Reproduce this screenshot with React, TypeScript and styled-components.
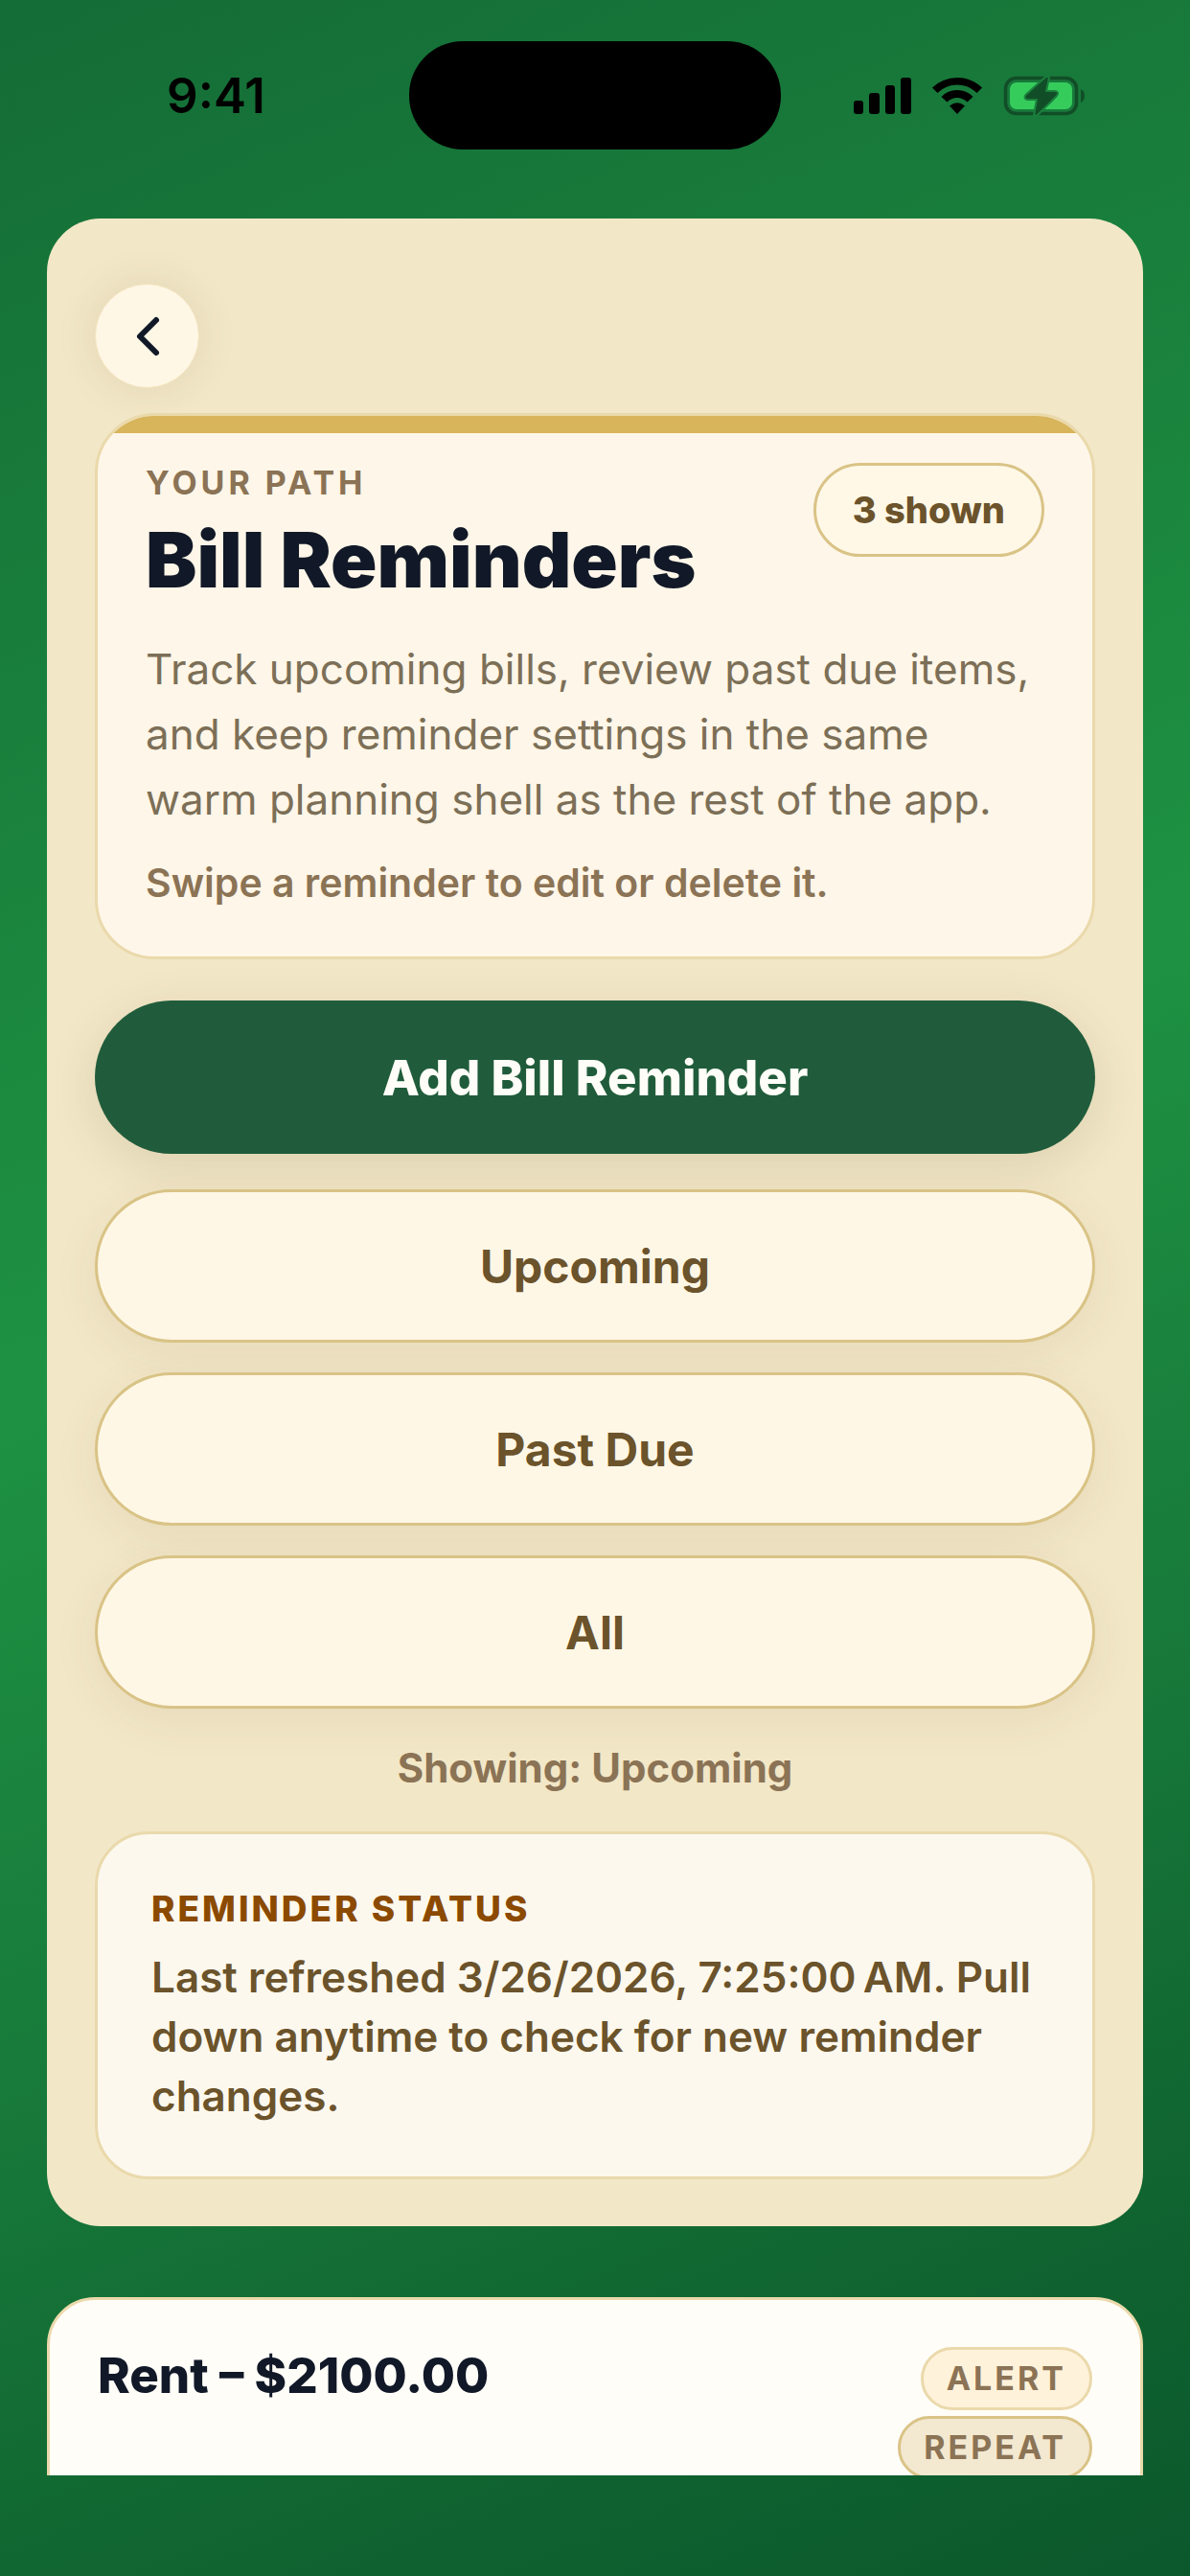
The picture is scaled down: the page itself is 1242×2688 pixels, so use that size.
import React from 'react';
import styled, { createGlobalStyle } from 'styled-components';

const GlobalStyle = createGlobalStyle`
  * { box-sizing: border-box; }
  html, body, #root { height: 100%; }
  body {
    margin: 0;
    font-family: Inter, "Liberation Sans", sans-serif;
    -webkit-font-smoothing: antialiased;
  }
  h1, h2, p { margin: 0; }
  button { font-family: inherit; cursor: pointer; }
`;

const Screen = styled.div`
  height: 100vh;
  display: flex;
  flex-direction: column;
  background: linear-gradient(158deg, #146c36 0%, #1e9242 46%, #17783a 70%, #116731 84%, #0b582c 100%);
`;

const StatusBar = styled.header`
  flex: none;
  display: grid;
  grid-template-columns: 1fr 388px 1fr;
  align-items: center;
  padding: 43px 0 72px;
`;

const Clock = styled.time`
  justify-self: center;
  padding-left: 24px;
  font-size: 51px;
  line-height: 60px;
  font-weight: 600;
  color: #000;
`;

const Island = styled.div`
  height: 113px;
  border-radius: 56px;
  background: #000;
`;

const Indicators = styled.div`
  display: flex;
  align-items: center;
  gap: 22px;
  padding-left: 76px;
`;

const Scroller = styled.main`
  flex: 1;
  min-height: 0;
  margin-bottom: 105px;
  padding: 0 49px;
  overflow: hidden;
  display: flex;
  flex-direction: column;
  gap: 74px;
`;

const Shell = styled.section`
  flex: none;
  display: flex;
  flex-direction: column;
  padding: 68px 50px 49px;
  border-radius: 56px;
  background: #f2e7c7;
`;

const BackButton = styled.button`
  width: 109px;
  height: 109px;
  margin-bottom: 26px;
  padding: 0;
  display: grid;
  place-items: center;
  border: 1px solid #f4e4bd;
  border-radius: 50%;
  background: #fff7e6;
  box-shadow: 0 0 44px rgba(80, 60, 20, 0.1);
`;

const Hero = styled.section`
  overflow: hidden;
  border: 3px solid #ead9ab;
  border-radius: 62px;
  background: #fef6e8;
  padding-bottom: 49px;
  margin-bottom: 43px;
`;

const HeroAccent = styled.div`
  height: 18px;
  background: #d8b45a;
`;

const HeroBody = styled.div`
  padding: 31px 50px 0;
`;

const HeroTop = styled.div`
  display: flex;
  justify-content: space-between;
  align-items: flex-start;
`;

const Eyebrow = styled.p`
  font-size: 34px;
  line-height: 42px;
  font-weight: 700;
  letter-spacing: 4px;
  color: #8b7355;
`;

const Title = styled.h1`
  margin-top: 13px;
  font-size: 80px;
  line-height: 92px;
  font-weight: 900;
  color: #111827;
`;

const CountPill = styled.span`
  flex: none;
  padding: 22px 38px;
  border: 3px solid #d9c386;
  border-radius: 49px;
  background: #fff8e7;
  font-size: 38px;
  line-height: 48px;
  font-weight: 800;
  color: #6b532b;
`;

const Lead = styled.p`
  margin-top: 34px;
  font-size: 44px;
  line-height: 68px;
  color: #7c6f57;
`;

const Hint = styled.p`
  margin-top: 25px;
  font-size: 41px;
  line-height: 56px;
  font-weight: 600;
  color: #8b7355;
`;

const PrimaryButton = styled.button`
  height: 160px;
  border: 0;
  border-radius: 80px;
  background: #205c3b;
  color: #fffdf7;
  font-size: 51px;
  font-weight: 800;
  box-shadow: 0 12px 50px rgba(80, 60, 20, 0.13);
`;

const Filters = styled.div`
  margin-top: 37px;
  display: flex;
  flex-direction: column;
  gap: 31px;
`;

const FilterButton = styled.button`
  height: 160px;
  border: 3px solid #d9c386;
  border-radius: 80px;
  background: #fff7e6;
  color: #6b532b;
  font-size: 48px;
  font-weight: 700;
  box-shadow: 0 12px 50px rgba(80, 60, 20, 0.07);
`;

const Showing = styled.p`
  margin: 37px 0 42px;
  text-align: center;
  font-size: 42px;
  line-height: 49px;
  font-weight: 700;
  color: #8b7355;
`;

const StatusCard = styled.section`
  padding: 56px 56px 53px;
  border: 3px solid #ead9ab;
  border-radius: 56px;
  background: #fcf8ee;
`;

const StatusLabel = styled.h2`
  font-size: 37px;
  line-height: 44px;
  font-weight: 800;
  letter-spacing: 3px;
  color: #8b4a00;
`;

const StatusText = styled.p`
  margin-top: 18px;
  font-size: 44px;
  line-height: 62px;
  font-weight: 600;
  color: #6b532b;
`;

const BillCard = styled.article`
  flex: none;
  display: flex;
  justify-content: space-between;
  align-items: flex-start;
  padding: 49px 50px;
  border: 3px solid #ead9ab;
  border-radius: 50px;
  background: #fffdf8;
`;

const BillTitle = styled.h2`
  font-size: 51px;
  line-height: 60px;
  font-weight: 800;
  color: #111827;
`;

const Badges = styled.div`
  display: flex;
  flex-direction: column;
  align-items: flex-end;
  gap: 6px;
`;

const Badge = styled.span<{ $strong?: boolean }>`
  padding: 9px 24px;
  border: 3px solid ${(p) => (p.$strong ? '#d9c386' : '#ead9ab')};
  border-radius: 33px;
  background: ${(p) => (p.$strong ? '#f3e8d0' : '#fff2da')};
  font-size: 34px;
  line-height: 42px;
  font-weight: 700;
  letter-spacing: 3px;
  color: #8b7355;
`;

const SignalIcon = () => (
  <svg width="60" height="38" viewBox="0 0 60 38" aria-hidden="true">
    <rect x="0" y="24" width="10" height="14" rx="3" />
    <rect x="16" y="16" width="11" height="22" rx="3" />
    <rect x="33" y="8" width="10" height="30" rx="3" />
    <rect x="49" y="0" width="11" height="38" rx="3" />
  </svg>
);

const WifiIcon = () => (
  <svg width="52" height="38" viewBox="0 0 52 38" aria-hidden="true">
    <path d="M0 10.5 Q11 0 26 0 Q41 0 52 10.5 L46.500 16 Q38 7.500 26 7.500 Q14 7.500 5.500 16 Z" />
    <path d="M9.500 20 Q16 13 26 13 Q36 13 42.500 20 L36.500 25.500 Q32 21 26 21 Q20 21 15.500 25.500 Z" />
    <path d="M18 29.500 Q26 23 34 29.500 L26 38 Z" />
  </svg>
);

const BatteryIcon = () => (
  <svg width="86" height="42" viewBox="0 0 86 42" aria-hidden="true">
    <rect x="2.500" y="2.500" width="74" height="37" rx="11" fill="none" stroke="#114e27" strokeWidth="3.500" />
    <rect x="7" y="7" width="65" height="28" rx="7" fill="#36cc5c" />
    <path d="M81 14 Q85 16 85 21 Q85 26 81 28 Z" fill="#114e27" />
    <path
      d="M45.500 0 L23.500 20 Q21 24 25 25 L35 25 L32 41 L35 42 L56 21 Q59 16.500 54 16 L45 16 L48 2 Z"
      fill="#114e27"
      stroke="#1b7f3d"
      strokeWidth="2"
      strokeLinejoin="round"
    />
  </svg>
);

const ChevronIcon = () => (
  <svg width="32" height="48" viewBox="0 0 32 48" fill="none" aria-hidden="true">
    <path d="M25 7 L8 24 L25 41" stroke="#111827" strokeWidth="6" strokeLinecap="round" strokeLinejoin="round" />
  </svg>
);

const filters = ['Upcoming', 'Past Due', 'All'];

export default function App() {
  return (
    <Screen>
      <GlobalStyle />
      <StatusBar>
        <Clock>9:41</Clock>
        <Island />
        <Indicators>
          <SignalIcon />
          <WifiIcon />
          <BatteryIcon />
        </Indicators>
      </StatusBar>
      <Scroller>
        <Shell>
          <BackButton type="button" aria-label="Back">
            <ChevronIcon />
          </BackButton>
          <Hero>
            <HeroAccent />
            <HeroBody>
              <HeroTop>
                <div>
                  <Eyebrow>YOUR PATH</Eyebrow>
                  <Title>Bill Reminders</Title>
                </div>
                <CountPill>3 shown</CountPill>
              </HeroTop>
              <Lead>
                Track upcoming bills, review past due items, and keep reminder settings in the same warm planning
                shell as the rest of the app.
              </Lead>
              <Hint>Swipe a reminder to edit or delete it.</Hint>
            </HeroBody>
          </Hero>
          <PrimaryButton type="button">Add Bill Reminder</PrimaryButton>
          <Filters>
            {filters.map((name) => (
              <FilterButton type="button" key={name}>
                {name}
              </FilterButton>
            ))}
          </Filters>
          <Showing>Showing: Upcoming</Showing>
          <StatusCard>
            <StatusLabel>REMINDER STATUS</StatusLabel>
            <StatusText>
              Last refreshed 3/26/2026, 7:25:00{'\u202f'}AM. Pull down anytime to check for new reminder changes.
            </StatusText>
          </StatusCard>
        </Shell>
        <BillCard>
          <BillTitle>Rent – $2100.00</BillTitle>
          <Badges>
            <Badge>ALERT</Badge>
            <Badge $strong>REPEAT</Badge>
          </Badges>
        </BillCard>
      </Scroller>
    </Screen>
  );
}
